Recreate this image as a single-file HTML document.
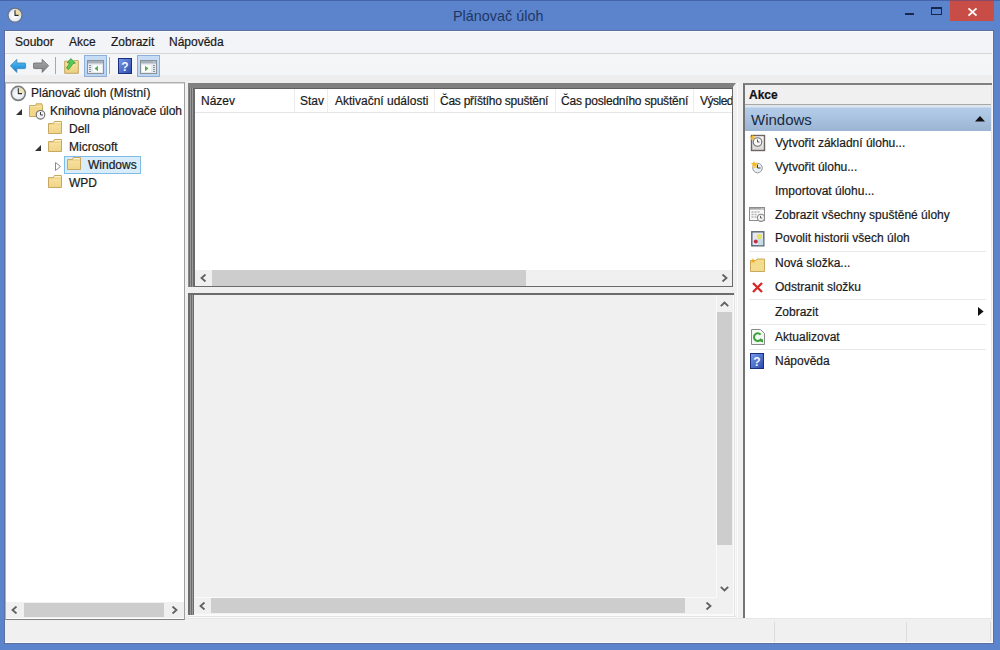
<!DOCTYPE html>
<html><head><meta charset="utf-8">
<style>
*{margin:0;padding:0;box-sizing:border-box}
html,body{width:1000px;height:650px;overflow:hidden;background:#5c84cc;font-family:"Liberation Sans",sans-serif;font-size:12px;color:#1e1e1e}
.a{position:absolute}
.t{position:absolute;white-space:nowrap;line-height:16px;font-size:12px;color:#1a1a1a;-webkit-text-stroke:0.2px #1a1a1a}
.sb{position:absolute;background:#f0f0f0}
.th{position:absolute;background:#cdcdcd}
.sep{position:absolute;height:1px;background:#e8e8e8}
</style></head><body>
<svg width="0" height="0" style="position:absolute"><defs><linearGradient id="gfold" x1="0" y1="0" x2="0" y2="1"><stop offset="0" stop-color="#f8e4a4"/><stop offset="1" stop-color="#f0d488"/></linearGradient></defs></svg>
<!-- window frame -->
<div class="a" style="left:0;top:0;width:1000px;height:1px;background:#4465aa"></div>
<!-- title icon -->
<svg class="a" style="left:7px;top:7px" width="17" height="17" viewBox="0 0 17 17">
 <circle cx="8" cy="8.2" r="7" fill="url(#gcl)" stroke="#6a7088" stroke-width="1.3"/>
 <path d="M8 8.2 L8 2 A6.2 6.2 0 0 1 14.2 8.2 Z" fill="#ead9a0" opacity="0.85"/>
 <path d="M8 3.3 V8.4 H11.6" stroke="#2a2a2a" stroke-width="1.1" fill="none"/>
</svg>
<div class="a" style="left:453px;top:5.5px;font-size:14.4px;line-height:20px;color:#1f3664;white-space:nowrap">Plánovač úloh</div>
<!-- min -->
<div class="a" style="left:905px;top:12.5px;width:9px;height:2.5px;background:#18284c"></div>
<!-- max -->
<div class="a" style="left:931px;top:7px;width:10.5px;height:8px;border:1.5px solid #18284c;border-top-width:2px"></div>
<!-- close -->
<div class="a" style="left:950px;top:0;width:44px;height:21px;background:#c94d47;border-top:1px solid #8a4a6a"></div>
<svg class="a" style="left:967px;top:7px" width="11" height="10" viewBox="0 0 11 10"><path d="M1.5 1.3 L9.5 8.7 M9.5 1.3 L1.5 8.7" stroke="#fff" stroke-width="1.8"/></svg>

<!-- client -->
<div class="a" style="left:5px;top:31px;width:988px;height:612px;background:#f0f0f0"></div>
<div class="a" style="left:4px;top:30px;width:990px;height:614px;border:1px solid #5f6e9e"></div>
<div class="a" style="left:5px;top:31px;width:988px;height:612px;border:1px solid #f8fbfd"></div>
<!-- menubar -->
<div class="a" style="left:6px;top:32px;width:986px;height:21px;background:#f3f4f7"></div>
<div class="a" style="left:5px;top:53px;width:988px;height:1px;background:#d6d6d6"></div>
<div class="t" style="left:15px;top:34px">Soubor</div>
<div class="t" style="left:69px;top:34px">Akce</div>
<div class="t" style="left:111px;top:34px">Zobrazit</div>
<div class="t" style="left:169px;top:34px">Nápověda</div>

<!-- toolbar -->
<div class="a" style="left:5px;top:54px;width:988px;height:28px;background:linear-gradient(#f5f6f8 0,#f4f5f7 20px,#eeeeee 22px,#eeeeee 100%)"></div>
<svg class="a" style="left:10px;top:58px" width="17" height="16" viewBox="0 0 17 16">
 <defs><linearGradient id="gb" x1="0" y1="0" x2="0" y2="1"><stop offset="0" stop-color="#5cc4f4"/><stop offset="0.6" stop-color="#2a9ae0"/><stop offset="1" stop-color="#1a78c0"/></linearGradient></defs>
 <path d="M0.4 7.8 L6.8 1.4 V5 H14.6 Q15.6 5 15.6 6 V9.6 Q15.6 10.6 14.6 10.6 H6.8 V14.4 Z" fill="url(#gb)" stroke="#3a80b8" stroke-width="0.8"/>
</svg>
<svg class="a" style="left:33px;top:58px" width="17" height="16" viewBox="0 0 17 16">
 <defs><linearGradient id="gf" x1="0" y1="0" x2="0" y2="1"><stop offset="0" stop-color="#a8a8a8"/><stop offset="1" stop-color="#808080"/></linearGradient></defs>
 <path d="M15.6 7.8 L9.2 1.4 V5 H1.4 Q0.4 5 0.4 6 V9.6 Q0.4 10.6 1.4 10.6 H9.2 V14.4 Z" fill="url(#gf)" stroke="#686868" stroke-width="0.8"/>
</svg>
<div class="a" style="left:55px;top:57px;width:1px;height:17px;background:#a8a8a8"></div>
<svg class="a" style="left:64px;top:58px" width="16" height="16" viewBox="0 0 16 16">
 <defs><linearGradient id="gfu" x1="0" y1="0" x2="0" y2="1"><stop offset="0" stop-color="#f6e6a0"/><stop offset="1" stop-color="#ecd080"/></linearGradient></defs>
 <path d="M0.7 3.2 H9.8 L10.6 2.6 H14.3 V15.3 H0.7 Z" fill="url(#gfu)" stroke="#c4a464" stroke-width="1"/>
 <path d="M6.8 0.6 L11.4 5 L9 5.6 L4.6 11.6 L2.4 10 L5.8 5.2 L3.2 4.8 Z" fill="#56cc56" stroke="#2e8a2e" stroke-width="0.7"/>
</svg>
<div class="a" style="left:84px;top:55px;width:23px;height:22px;background:linear-gradient(#c8def6,#bcd4ee);border:1px solid #8eb0d8"></div>
<svg class="a" style="left:87px;top:60px" width="17" height="14" viewBox="0 0 17 14">
 <rect x="0.5" y="0.5" width="16" height="13" fill="#e6eaee" stroke="#8a929c"/>
 <rect x="1" y="1" width="15" height="2.5" fill="#a8b0bc"/>
 <path d="M2 5.5h2M2 7.5h2M2 9.5h2M2 11.5h2" stroke="#8a929c" stroke-width="1"/>
 <rect x="6" y="5" width="9" height="7" fill="#fbfdfb"/>
 <path d="M11 5.8 L7.5 8.5 L11 11.2 Z" fill="#5aa85a"/>
</svg>
<div class="a" style="left:109px;top:57px;width:1px;height:17px;background:#a8a8a8"></div>
<svg class="a" style="left:118px;top:58px" width="14" height="16" viewBox="0 0 14 16">
 <defs><linearGradient id="gh" x1="0" y1="0" x2="1" y2="1"><stop offset="0" stop-color="#7a9cec"/><stop offset="1" stop-color="#2a4aaa"/></linearGradient></defs>
 <rect x="0.5" y="0.5" width="13" height="15" fill="url(#gh)" stroke="#1a2f80"/>
 <text x="7" y="13" font-family="Liberation Sans" font-weight="bold" font-size="12" fill="#f4f6ff" text-anchor="middle">?</text>
</svg>
<div class="a" style="left:137px;top:55px;width:23px;height:22px;background:linear-gradient(#c8def6,#bcd4ee);border:1px solid #8eb0d8"></div>
<svg class="a" style="left:140px;top:60px" width="17" height="14" viewBox="0 0 17 14">
 <rect x="0.5" y="0.5" width="16" height="13" fill="#e6eaee" stroke="#8a929c"/>
 <rect x="1" y="1" width="15" height="2.5" fill="#a8b0bc"/>
 <path d="M13 1.8h1M14.5 1.8h1" stroke="#e0e0e0" stroke-width="0.8"/>
 <path d="M13 5.5h2M13 7.5h2M13 9.5h2M13 11.5h2" stroke="#8a929c" stroke-width="1"/>
 <rect x="2" y="5" width="9" height="7" fill="#fbfdfb"/>
 <path d="M5 5.8 L8.5 8.5 L5 11.2 Z" fill="#5aa85a"/>
</svg>

<!-- ================= tree pane ================= -->
<div class="a" style="left:5px;top:82px;width:180px;height:538px;background:#fff;border:1px solid #b0b0b0;border-right-color:#a0a0a0;border-bottom-color:#808080"></div>
<div class="a" style="left:6px;top:83px;width:178px;height:1px;background:#d8d8d8"></div>
<svg class="a" style="left:10px;top:85px" width="17" height="17" viewBox="0 0 17 17">
 <defs><radialGradient id="gcl" cx="0.45" cy="0.55" r="0.6"><stop offset="0" stop-color="#ffffff"/><stop offset="1" stop-color="#d8e0ec"/></radialGradient></defs>
 <circle cx="8.3" cy="8.4" r="7" fill="url(#gcl)" stroke="#7c7c7c" stroke-width="1.6"/>
 <path d="M8.3 8.4 L8.3 2.2 A6.2 6.2 0 0 1 14.5 8.4 Z" fill="#eadfae" opacity="0.8"/>
 <path d="M8.3 3.2 V8.6 H12" stroke="#303030" stroke-width="1.1" fill="none"/>
</svg>
<div class="t" style="left:31px;top:85px">Plánovač úloh (Místní)</div>
<svg class="a" style="left:16px;top:109px" width="6" height="6" viewBox="0 0 6 6"><path d="M6 0 V6 H0 Z" fill="#333"/></svg>
<svg class="a" style="left:29px;top:103px" width="17" height="17" viewBox="0 0 17 17">
 <path d="M0.5 2.5 H7 V0.8 H13 V2.5 H13.5 V13.5 H0.5 Z" fill="#f2d888" stroke="#c8ac64"/>
 <path d="M1 3.5 H13" stroke="#f8e8b0" stroke-width="0.8"/>
 <circle cx="11.5" cy="11.8" r="4.3" fill="#f0f2f6" stroke="#6e6e6e" stroke-width="1.1"/>
 <path d="M11.5 9 V12 H14" stroke="#333" stroke-width="0.9" fill="none"/>
</svg>
<div class="t" style="left:50px;top:103px;letter-spacing:-0.1px">Knihovna plánovače úloh</div>
<svg class="a" style="left:48px;top:121px" width="14" height="13" viewBox="0 0 14 13"><defs></defs><path d="M0.5 2.5 H5.5 L6.3 0.5 H13.5 V12.5 H0.5 Z" fill="url(#gfold)" stroke="#c6a862"/><path d="M6.8 1.5 H12.8" stroke="#fff4d0" stroke-width="0.9"/><path d="M1 3.3 H13" stroke="#e8cc80" stroke-width="0.7"/></svg>
<div class="t" style="left:69px;top:121px">Dell</div>
<svg class="a" style="left:35px;top:145px" width="6" height="6" viewBox="0 0 6 6"><path d="M6 0 V6 H0 Z" fill="#333"/></svg>
<svg class="a" style="left:48px;top:139px" width="14" height="13" viewBox="0 0 14 13"><defs></defs><path d="M0.5 2.5 H5.5 L6.3 0.5 H13.5 V12.5 H0.5 Z" fill="url(#gfold)" stroke="#c6a862"/><path d="M6.8 1.5 H12.8" stroke="#fff4d0" stroke-width="0.9"/><path d="M1 3.3 H13" stroke="#e8cc80" stroke-width="0.7"/></svg>
<div class="t" style="left:69px;top:139px">Microsoft</div>
<svg class="a" style="left:55px;top:162px" width="6" height="9" viewBox="0 0 6 9"><path d="M0.5 0.5 L5.5 4.5 L0.5 8.5 Z" fill="none" stroke="#8a8a8a"/></svg>
<div class="a" style="left:64px;top:156px;width:77px;height:18px;background:#d8ecfa;border:1px solid #7fbde6"></div>
<svg class="a" style="left:67px;top:157px" width="14" height="13" viewBox="0 0 14 13"><defs></defs><path d="M0.5 2.5 H5.5 L6.3 0.5 H13.5 V12.5 H0.5 Z" fill="url(#gfold)" stroke="#c6a862"/><path d="M6.8 1.5 H12.8" stroke="#fff4d0" stroke-width="0.9"/><path d="M1 3.3 H13" stroke="#e8cc80" stroke-width="0.7"/></svg>
<div class="t" style="left:88px;top:157px">Windows</div>
<svg class="a" style="left:48px;top:175px" width="14" height="13" viewBox="0 0 14 13"><defs></defs><path d="M0.5 2.5 H5.5 L6.3 0.5 H13.5 V12.5 H0.5 Z" fill="url(#gfold)" stroke="#c6a862"/><path d="M6.8 1.5 H12.8" stroke="#fff4d0" stroke-width="0.9"/><path d="M1 3.3 H13" stroke="#e8cc80" stroke-width="0.7"/></svg>
<div class="t" style="left:69px;top:175px">WPD</div>
<!-- tree hscroll -->
<div class="sb" style="left:6px;top:602px;width:178px;height:16px"></div>
<div class="th" style="left:24px;top:603px;width:140px;height:14px"></div>
<svg class="a" style="left:11px;top:606px" width="7" height="8" viewBox="0 0 7 8"><path d="M5.5 0.5 L1.5 4 L5.5 7.5" fill="none" stroke="#606060" stroke-width="1.8"/></svg>
<svg class="a" style="left:171px;top:606px" width="7" height="8" viewBox="0 0 7 8"><path d="M1.5 0.5 L5.5 4 L1.5 7.5" fill="none" stroke="#606060" stroke-width="1.8"/></svg>

<!-- ================= center top pane ================= -->
<div class="a" style="left:188px;top:83px;width:545px;height:204px;background:#6a6a6a"></div>
<div class="a" style="left:188px;top:83px;width:1px;height:204px;background:#8a8a8a"></div>
<div class="a" style="left:188px;top:83px;width:548px;height:5px;background:#808080;clip-path:polygon(0 0,100% 0,calc(100% - 4px) 100%,0 100%)"></div>
<div class="a" style="left:190px;top:88px;width:1px;height:199px;background:#9a9a9a"></div>
<div class="a" style="left:192px;top:88px;width:1px;height:199px;background:#9a9a9a"></div>
<div class="a" style="left:193px;top:88px;width:540px;height:1px;background:#606060"></div>
<div class="a" style="left:195px;top:89px;width:537px;height:197px;background:#fff"></div>
<!-- header -->
<div class="a" style="left:195px;top:112px;width:537px;height:1px;background:#e6e6e6"></div>
<div class="a" style="left:294px;top:89px;width:1px;height:23px;background:#ececec"></div>
<div class="a" style="left:327px;top:89px;width:1px;height:23px;background:#ececec"></div>
<div class="a" style="left:434px;top:89px;width:1px;height:23px;background:#ececec"></div>
<div class="a" style="left:555px;top:89px;width:1px;height:23px;background:#ececec"></div>
<div class="a" style="left:693px;top:89px;width:1px;height:23px;background:#ececec"></div>
<div class="t" style="left:201px;top:93px">Název</div>
<div class="t" style="left:300px;top:93px">Stav</div>
<div class="t" style="left:335px;top:93px">Aktivační události</div>
<div class="t" style="left:440px;top:93px;letter-spacing:-0.25px">Čas příštího spuštění</div>
<div class="t" style="left:561px;top:93px;letter-spacing:-0.22px">Čas posledního spuštění</div>
<div class="a" style="left:700px;top:89px;width:32px;height:23px;overflow:hidden"><div class="t" style="left:0;top:4px;letter-spacing:-0.5px">Výsledek</div></div>
<!-- top h scroll -->
<div class="sb" style="left:195px;top:270px;width:537px;height:16px"></div>
<div class="th" style="left:212px;top:270px;width:314px;height:16px"></div>
<svg class="a" style="left:200px;top:274px" width="7" height="8" viewBox="0 0 7 8"><path d="M5.5 0.5 L1.5 4 L5.5 7.5" fill="none" stroke="#606060" stroke-width="1.8"/></svg>
<svg class="a" style="left:721px;top:274px" width="7" height="8" viewBox="0 0 7 8"><path d="M1.5 0.5 L5.5 4 L1.5 7.5" fill="none" stroke="#606060" stroke-width="1.8"/></svg>

<!-- ================= center bottom pane ================= -->
<div class="a" style="left:188px;top:293px;width:548px;height:325px;background:#fafafa"></div>
<div class="a" style="left:188px;top:293px;width:546px;height:2px;background:#6c6c6c"></div>
<div class="a" style="left:188px;top:293px;width:6px;height:322px;background:#6c6c6c"></div>
<div class="a" style="left:190px;top:295px;width:1px;height:320px;background:#989898"></div>
<div class="a" style="left:192px;top:295px;width:1px;height:320px;background:#989898"></div>
<div class="a" style="left:194px;top:295px;width:539px;height:320px;background:#f0f0f0"></div>
<div class="a" style="left:188px;top:616px;width:548px;height:1px;background:#e4e4e4"></div>
<div class="a" style="left:734px;top:293px;width:1px;height:324px;background:#e4e4e4"></div>
<div class="a" style="left:194px;top:614px;width:539px;height:1px;background:#fafafa"></div>
<!-- v scroll -->
<div class="a" style="left:716px;top:295px;width:1px;height:303px;background:#fafafa"></div>
<div class="th" style="left:717px;top:312px;width:15px;height:233px"></div>
<svg class="a" style="left:720px;top:301px" width="9" height="6" viewBox="0 0 9 6"><path d="M0.8 5.2 L4.5 1.5 L8.2 5.2" fill="none" stroke="#606060" stroke-width="1.8"/></svg>
<svg class="a" style="left:720px;top:586px" width="9" height="6" viewBox="0 0 9 6"><path d="M0.8 0.8 L4.5 4.5 L8.2 0.8" fill="none" stroke="#606060" stroke-width="1.8"/></svg>
<!-- h scroll -->
<div class="a" style="left:194px;top:597px;width:523px;height:1px;background:#fafafa"></div>
<div class="th" style="left:211px;top:598px;width:474px;height:15px"></div>
<svg class="a" style="left:199px;top:602px" width="7" height="8" viewBox="0 0 7 8"><path d="M5.5 0.5 L1.5 4 L5.5 7.5" fill="none" stroke="#606060" stroke-width="1.8"/></svg>
<svg class="a" style="left:705px;top:602px" width="7" height="8" viewBox="0 0 7 8"><path d="M1.5 0.5 L5.5 4 L1.5 7.5" fill="none" stroke="#606060" stroke-width="1.8"/></svg>

<!-- ================= right pane ================= -->
<div class="a" style="left:743px;top:83px;width:249px;height:536px;background:#fff;border-left:2px solid #747474;border-top:2px solid #7f7f7f"></div>
<div class="a" style="left:745px;top:85px;width:246px;height:19px;background:#f0f0f0"></div>
<div class="a" style="left:745px;top:104px;width:246px;height:1px;background:#a8a8a8"></div>
<div class="t" style="left:749px;top:87px;font-weight:bold;color:#111">Akce</div>
<div class="a" style="left:745px;top:105px;width:246px;height:26px;background:linear-gradient(#dde6ef 0px,#dde6ef 2px,#b3cde9 3px,#aac4e2 45%,#9bb4d2 100%)"></div>
<div class="a" style="left:751px;top:110px;font-size:15px;line-height:20px;color:#1a2a40;white-space:nowrap">Windows</div>
<svg class="a" style="left:975px;top:115px" width="10" height="7" viewBox="0 0 10 7"><path d="M0 6.5 L5 1 L10 6.5 Z" fill="#111"/></svg>

<svg class="a" style="left:749px;top:134px" width="17" height="18" viewBox="0 0 17 18">
 <defs><linearGradient id="gbox" x1="0" y1="0" x2="0" y2="1"><stop offset="0" stop-color="#fafafa"/><stop offset="1" stop-color="#d8d8d8"/></linearGradient></defs>
 <rect x="2.5" y="1.5" width="13" height="15" fill="url(#gbox)" stroke="#6e6464" stroke-width="1.4"/>
 <circle cx="8.5" cy="8" r="4.3" fill="#f8f8f8" stroke="#707070" stroke-width="1.1"/>
 <path d="M8.5 5.5 V8 H10.5" stroke="#444" stroke-width="0.9" fill="none"/>
 <path d="M3.5 0.5 L4.3 2.8 L6.8 2.8 L4.8 4.3 L5.6 6.8 L3.5 5.2 L1.4 6.8 L2.2 4.3 L0.2 2.8 L2.7 2.8 Z" fill="#f4b820" opacity="0.9"/>
</svg>
<div class="t" style="left:775px;top:135px">Vytvořit základní úlohu...</div>
<svg class="a" style="left:750px;top:160px" width="14" height="15" viewBox="0 0 14 15">
 <circle cx="7.5" cy="8" r="4.8" fill="#e6eef6" stroke="#9a9a9a" stroke-width="1"/>
 <path d="M2.7 8 A4.8 4.8 0 0 1 7.5 3.2 V8 Z" fill="#f2d070"/>
 <path d="M7.5 4.5 V8 H10.5" stroke="#404040" stroke-width="1" fill="none"/>
 <path d="M4 0.8 L4.9 3 L7.2 3 L5.4 4.4 L6.1 6.6 L4 5.3 L1.9 6.6 L2.6 4.4 L0.8 3 L3.1 3 Z" fill="#f4b820"/>
</svg>
<div class="t" style="left:775px;top:159px">Vytvořit úlohu...</div>
<div class="t" style="left:775px;top:183px">Importovat úlohu...</div>
<svg class="a" style="left:749px;top:207px" width="17" height="16" viewBox="0 0 17 16">
 <rect x="0.5" y="0.5" width="15" height="13" fill="#f8f8f8" stroke="#8c8c8c"/>
 <rect x="1" y="1" width="14" height="1.6" fill="#a8a8a8"/>
 <path d="M12 1.8h1M13.5 1.8h1" stroke="#fff" stroke-width="0.6"/>
 <path d="M2.5 5h2M5.5 5h2M8.5 5h2M2.5 7.5h2M5.5 7.5h2M2.5 10h2M5.5 10h2" stroke="#b4b4b4" stroke-width="1.3"/>
 <circle cx="12" cy="10.8" r="3.6" fill="#f4f4f4" stroke="#8a8a8a" stroke-width="1.1"/>
 <path d="M11.5 8.8 V11 H13.2" stroke="#555" fill="none" stroke-width="0.9"/>
</svg>
<div class="t" style="left:775px;top:207px">Zobrazit všechny spuštěné úlohy</div>
<svg class="a" style="left:751px;top:231px" width="14" height="16" viewBox="0 0 14 16">
 <rect x="0.8" y="0.8" width="12" height="14" fill="#e4e8ee" stroke="#5a6272" stroke-width="1.4"/>
 <path d="M7 8 H12.2 V14.2 H7 Z" fill="#c8dce8"/>
 <circle cx="8.5" cy="5.5" r="2.6" fill="#e8e060"/>
 <circle cx="4.8" cy="10.5" r="2" fill="#c03040"/>
</svg>
<div class="t" style="left:775px;top:230px">Povolit historii všech úloh</div>
<div class="sep" style="left:749px;top:251px;width:237px"></div>
<svg class="a" style="left:750px;top:258px" width="16" height="14" viewBox="0 0 16 14">
 <path d="M0.5 2.5 H6 L7 1 H14.5 V13.5 H0.5 Z" fill="#f4dc8e" stroke="#caa85c"/>
 <path d="M3 0 L3.8 2 L6 2 L4.2 3.2 L4.8 5.3 L3 4 L1.2 5.3 L1.8 3.2 L0 2 L2.2 2 Z" fill="#f0a820"/>
</svg>
<div class="t" style="left:775px;top:255px">Nová složka...</div>
<svg class="a" style="left:752px;top:282px" width="11" height="11" viewBox="0 0 11 11"><path d="M1 1 L10 10 M10 1 L1 10" stroke="#d42a2a" stroke-width="2.4"/></svg>
<div class="t" style="left:775px;top:279px">Odstranit složku</div>
<div class="sep" style="left:749px;top:299px;width:237px"></div>
<div class="t" style="left:775px;top:304px">Zobrazit</div>
<svg class="a" style="left:978px;top:307px" width="6" height="9" viewBox="0 0 6 9"><path d="M0 0 L5.6 4.5 L0 9 Z" fill="#111"/></svg>
<div class="sep" style="left:749px;top:324px;width:237px"></div>
<svg class="a" style="left:751px;top:329px" width="14" height="16" viewBox="0 0 14 16">
 <path d="M0.5 0.5 H9.5 L13.5 4.5 V15.5 H0.5 Z" fill="#f4f8f2" stroke="#8a8a8a"/>
 <path d="M10.2 9.8 A3.8 3.8 0 1 1 9.6 5.6" fill="none" stroke="#3aa03a" stroke-width="2"/>
 <path d="M8 12 L12 10 L12 13.5 Z" fill="#3aa03a"/>
</svg>
<div class="t" style="left:775px;top:329px">Aktualizovat</div>
<div class="sep" style="left:749px;top:349px;width:237px"></div>
<svg class="a" style="left:750px;top:353px" width="14" height="16" viewBox="0 0 14 16">
 <rect x="0.5" y="0.5" width="13" height="15" fill="url(#gh)" stroke="#1a2f80"/>
 <text x="7" y="13" font-family="Liberation Sans" font-weight="bold" font-size="12" fill="#f4f6ff" text-anchor="middle">?</text>
</svg>
<div class="t" style="left:775px;top:353px">Nápověda</div>

<!-- splitter lines -->
<div class="a" style="left:991px;top:85px;width:1px;height:533px;background:#e8e8e8"></div>
<div class="a" style="left:737px;top:83px;width:1px;height:535px;background:#fbfbfb"></div>

<!-- status bar -->
<div class="a" style="left:185px;top:618px;width:808px;height:1px;background:#e6e6e6"></div>
<div class="a" style="left:5px;top:620px;width:988px;height:23px;background:#f0f0f0"></div>
<div class="a" style="left:774px;top:622px;width:1px;height:20px;background:#dadada"></div>
<div class="a" style="left:906px;top:622px;width:1px;height:20px;background:#dadada"></div>
<div class="a" style="left:990px;top:622px;width:1px;height:19px;background:#dadada"></div>
<div class="a" style="left:5px;top:642px;width:988px;height:1px;background:#fafafa"></div>
<div class="a" style="left:992px;top:31px;width:1px;height:612px;background:#f8f8f8"></div>
</body></html>
